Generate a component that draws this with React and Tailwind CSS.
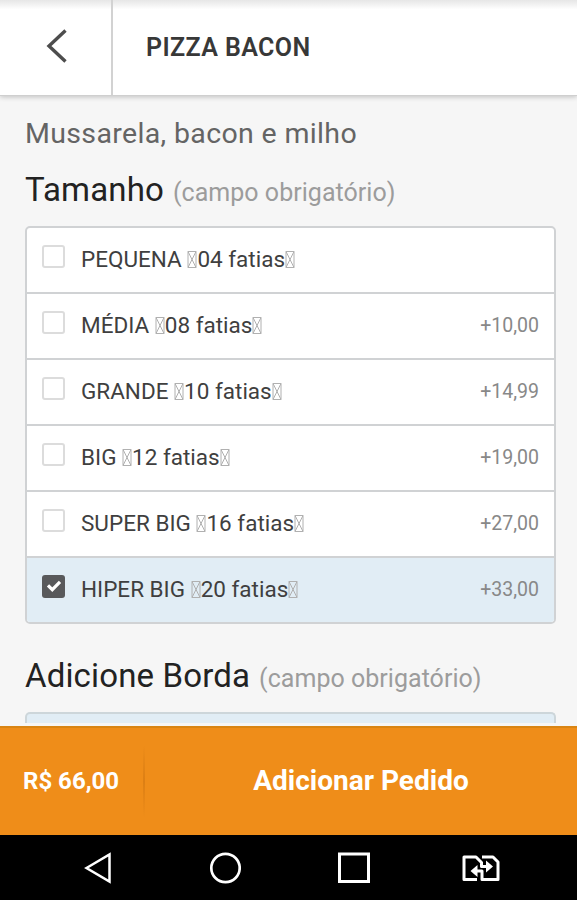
import React from 'react'

const sizes = [
  { name: 'PEQUENA', slices: '04' },
  { name: 'MÉDIA', slices: '08', price: '+10,00' },
  { name: 'GRANDE', slices: '10', price: '+14,99' },
  { name: 'BIG', slices: '12', price: '+19,00' },
  { name: 'SUPER BIG', slices: '16', price: '+27,00' },
  { name: 'HIPER BIG', slices: '20', price: '+33,00', checked: true },
]

// Box shown in place of a missing glyph
function GlyphBox() {
  return (
    <svg className="inline-block w-[10px] h-[17px] -mt-1 align-middle" viewBox="0 0 10 17" fill="none" stroke="#b0b0b0" strokeWidth="1">
      <path d="M1 .5h8v16H1zM1 .5l8 16M9 .5l-8 16" />
    </svg>
  )
}

function Checkbox({ checked }) {
  if (checked) {
    return (
      <span className="flex w-[23px] h-[23px] items-center justify-center rounded-[3px] bg-[#58595b]">
        <svg className="w-[16px] h-[14px]" viewBox="0 0 16 14" fill="none" stroke="#fff" strokeWidth="3.2">
          <path d="M2 6.3l4.3 4.4L14 2.8" />
        </svg>
      </span>
    )
  }
  return <span className="w-[23px] h-[23px] rounded-[3px] border-2 border-[#dcdcdc] bg-white" />
}

function SectionTitle({ children }) {
  return (
    <h2 className="flex items-baseline whitespace-nowrap text-[33px] leading-[40px] text-[#222] tracking-[0.15px]">
      {children}
      <span className="ml-[9px] text-[25px] text-[#9c9c9c] tracking-[0.03px]">(campo obrigatório)</span>
    </h2>
  )
}

export default function App() {
  return (
    <div className="flex flex-col w-[577px] h-[900px] overflow-hidden bg-[#f6f6f6] font-['Roboto',sans-serif]">
      <header className="relative flex h-[96px] shrink-0 border-b border-[#cfcfcf] bg-linear-to-b from-[#e6e6e6] via-white via-10% to-white shadow-[0_1px_5px_rgba(0,0,0,0.22)]">
        <button className="w-[113px] border-r-2 border-[#d2d2d2] pb-[3px] pl-[46px]">
          <svg className="w-[22px] h-[34px]" viewBox="0 0 22 34" fill="none" stroke="#4d4d4d" strokeWidth="3.4">
            <path d="M19.500 1.500L3 17l16.500 15.500" />
          </svg>
        </button>
        <h1 className="pl-[33px] text-[25px] leading-[95px] font-semibold text-[#383838] tracking-[0.4px]">PIZZA BACON</h1>
      </header>

      <main className="flex-1 min-h-0 overflow-hidden px-[25px] pt-[20px]">
        <p className="text-[28.5px] leading-[36px] text-[#646464] tracking-[0.35px]">Mussarela, bacon e milho</p>
        <div className="mt-[18px]">
          <SectionTitle>Tamanho</SectionTitle>
        </div>
        <ul className="mt-[13px] w-[531px] overflow-hidden rounded-[5px] border-2 border-[#d0d2d4] bg-white">
          {sizes.map((s) => (
            <li
              key={s.name}
              className={`flex h-[66px] items-center border-b-2 border-[#d0d2d4] px-[15px] last:h-[64px] last:border-b-0 ${s.checked ? 'bg-[#e1edf5]' : ''}`}
            >
              <span className="-mt-[8px] flex">
                <Checkbox checked={s.checked} />
              </span>
              <span className="ml-[16px] whitespace-nowrap text-[22.5px] text-[#3f3f3f]">
                {s.name} <GlyphBox />
                {s.slices} fatias
                <GlyphBox />
              </span>
              <span className="ml-auto text-[19.5px] text-[#888]">{s.price}</span>
            </li>
          ))}
        </ul>
        <div className="mt-[32px]">
          <SectionTitle>Adicione Borda</SectionTitle>
        </div>
        <div className="mt-[13px] h-[11px] w-[531px] rounded-t-[5px] border-2 border-b-0 border-[#cdd6da] bg-[#e1edf5]" />
      </main>

      <footer className="flex h-[109px] shrink-0 items-center border-t-2 border-[#d98514] bg-[#ef8d19] pb-[2px] text-white font-bold">
        <span className="w-[143px] pl-[23px] text-[24px]">R$ 66,00</span>
        <span className="h-[72px] w-[2px] bg-linear-to-b from-transparent via-[#dc7f14] to-transparent" />
        <span className="flex-1 text-center text-[28px]">Adicionar Pedido</span>
      </footer>

      <nav className="flex h-[65px] shrink-0 items-center bg-black pl-[84px]">
        <svg className="w-[28px] h-[32px]" viewBox="0 0 28 32" fill="none" stroke="#fff" strokeWidth="2.5">
          <path d="M2.5 16L25.5 2.5v27z" />
        </svg>
        <svg className="ml-[97px] w-[32px] h-[32px]" viewBox="0 0 32 32" fill="none" stroke="#fff" strokeWidth="2.7">
          <circle cx="16.5" cy="16" r="14.2" />
        </svg>
        <svg className="ml-[97px] w-[32px] h-[32px]" viewBox="0 0 32 32" fill="none" stroke="#fff" strokeWidth="3">
          <path d="M1.5 2h29v27.5h-29z" />
        </svg>
        <svg className="ml-[92px] w-[38px] h-[26px]" viewBox="0 0 38 26" fill="none" stroke="#fff" strokeWidth="3" strokeLinejoin="round">
          <path d="M15 24.5H2V2h12l5.500 5.500V11.500h6M20 2h11l5 5v17.500H20V16h-6" />
          <path d="M24 5.5l7 6-7 6zM15.500 10l-7 6 7 6z" fill="#fff" stroke="none" />
        </svg>
      </nav>
    </div>
  )
}
